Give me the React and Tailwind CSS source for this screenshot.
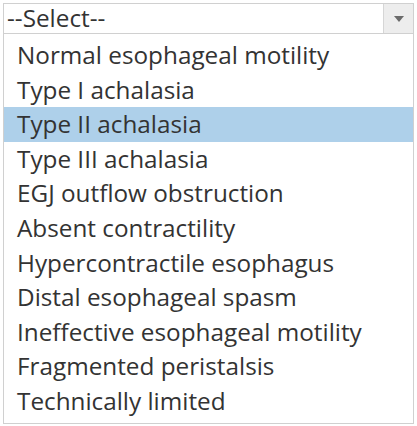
const options = [
  'Normal esophageal motility',
  'Type I achalasia',
  'Type II achalasia',
  'Type III achalasia',
  'EGJ outflow obstruction',
  'Absent contractility',
  'Hypercontractile esophagus',
  'Distal esophageal spasm',
  'Ineffective esophageal motility',
  'Fragmented peristalsis',
  'Technically limited',
];

export default function App() {
  const selected = 'Type II achalasia';

  return (
    <div className="min-h-screen bg-white pl-[3px] pt-[3px] font-['Open_Sans',sans-serif] text-[24.3px] text-[#333]">
      <div className="w-[411px]">
        <div className="flex h-[31px] items-stretch border border-[#d0d0d0] bg-white">
          <div className="flex flex-1 items-center pl-[3px] leading-none">--Select--</div>
          <div className="flex w-[30px] items-center justify-center border-l border-[#d6d6d6] bg-[#ededed]">
            <svg width="10" height="6" viewBox="0 0 10 6">
              <path d="M0 0 H10 L5 6 Z" fill="#6b6b6b" />
            </svg>
          </div>
        </div>
        <ul className="border border-t-0 border-[#d0d0d0] bg-white pb-[4px] pt-[4px]">
          {options.map((option) => (
            <li
              key={option}
              className={
                option === selected
                  ? 'flex h-[34.6px] items-center bg-[#aed0ea] pl-[13px]'
                  : 'flex h-[34.6px] items-center pl-[13px]'
              }
            >
              {option}
            </li>
          ))}
        </ul>
      </div>
    </div>
  );
}
